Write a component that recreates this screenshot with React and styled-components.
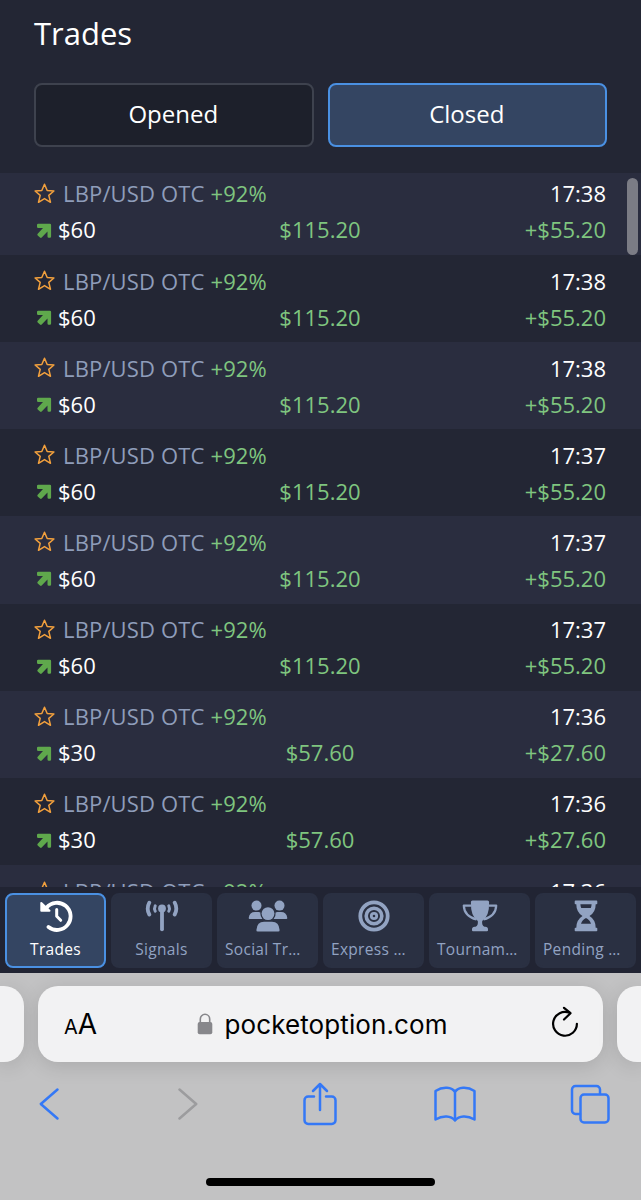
import React from "react";
import styled, { createGlobalStyle } from "styled-components";

const closedTrades = [
  { time: "17:38", amount: "$60", payout: "$115.20", profit: "+$55.20" },
  { time: "17:38", amount: "$60", payout: "$115.20", profit: "+$55.20" },
  { time: "17:38", amount: "$60", payout: "$115.20", profit: "+$55.20" },
  { time: "17:37", amount: "$60", payout: "$115.20", profit: "+$55.20" },
  { time: "17:37", amount: "$60", payout: "$115.20", profit: "+$55.20" },
  { time: "17:37", amount: "$60", payout: "$115.20", profit: "+$55.20" },
  { time: "17:36", amount: "$30", payout: "$57.60", profit: "+$27.60" },
  { time: "17:36", amount: "$30", payout: "$57.60", profit: "+$27.60" },
  { time: "17:36" },
];

const StarIcon = () => (
  <svg width="21" height="21" viewBox="0 0 21 21">
    <path
      d="M10.500 1.200l2.700 6.300 6.700.5-5.100 4.400 1.700 6.900-6-3.700-6 3.700 1.700-6.900L1.100 8l6.700-.5z"
      fill="none"
      stroke="#f2a03d"
      strokeWidth="1.500"
      strokeLinejoin="round"
    />
  </svg>
);

const ArrowIcon = () => (
  <svg width="16" height="16" viewBox="0 0 16 16">
    <path
      d="M2.200 .8h11.700a1.200 1.200 0 0 1 1.200 1.200v11.600a1.200 1.200 0 0 1-1.200 1.200h-1.200a1.200 1.200 0 0 1-1.200-1.200V8.400L5.700 14.500a1.200 1.200 0 0 1-1.700 0l-2.300-2a1.200 1.200 0 0 1 0-1.700L7 5H2.200A1.200 1.200 0 0 1 1 3.800V2A1.200 1.200 0 0 1 2.200 .8z"
      fill="#5fa84c"
    />
  </svg>
);

const HistoryIcon = () => (
  <svg width="34" height="32" viewBox="0 0 34 32">
    <path
      d="M7.500 7.700A13.600 13.600 0 1 1 9.500 27"
      fill="none"
      stroke="currentColor"
      strokeWidth="3.800"
      strokeLinecap="round"
    />
    <path
      d="M2.300 3v7.700h8.200z"
      fill="currentColor"
      stroke="currentColor"
      strokeWidth="2"
      strokeLinejoin="round"
    />
    <path
      d="M17.700 9.500v6.800l4 4"
      fill="none"
      stroke="currentColor"
      strokeWidth="3"
      strokeLinecap="round"
      strokeLinejoin="round"
    />
  </svg>
);

const AntennaIcon = () => (
  <svg width="34" height="32" viewBox="0 0 34 32">
    <circle cx="17" cy="8.500" r="3.900" fill="currentColor" />
    <g fill="none" stroke="currentColor" strokeLinecap="round">
      <path d="M17 9v20.300" strokeWidth="3.800" />
      <path
        d="M10.200 5.800q-1.300 2.700 0 5.400M23.800 5.800q1.300 2.700 0 5.400"
        strokeWidth="3"
      />
      <path
        d="M4.300 2.700q-3.200 6 0 11.800M29.700 2.700q3.200 6 0 11.800"
        strokeWidth="3.800"
      />
    </g>
  </svg>
);

const PeopleIcon = () => (
  <svg width="40" height="32" viewBox="0 0 40 32" fill="currentColor">
    <circle cx="8.500" cy="5.600" r="5" />
    <circle cx="31.500" cy="5.600" r="5" />
    <circle cx="20" cy="13.600" r="6.400" />
    <path d="M1.700 19A1 1 0 0 1 .7 17.900q.8-5.900 6.300-5.900h3.600q1 0 1.800.5-.4 3.900 2 6.500z" />
    <path d="M38.300 19a1 1 0 0 0 1-1.100q-.8-5.900-6.300-5.900h-3.600q-1 0-1.800.5.4 3.900-2 6.500z" />
    <path d="M16 21.700h8q7 0 7.600 8.200a1.400 1.400 0 0 1-1.400 1.600H9.800a1.400 1.400 0 0 1-1.400-1.600q.6-8.200 7.600-8.200z" />
  </svg>
);

const TargetIcon = () => (
  <svg width="32" height="32" viewBox="0 0 32 32">
    <g fill="none" stroke="currentColor">
      <circle cx="16" cy="16" r="13.700" strokeWidth="3.800" />
      <circle cx="16" cy="16" r="7.800" strokeWidth="3.600" />
      <circle cx="16" cy="16" r="2.700" strokeWidth="2.800" />
    </g>
  </svg>
);

const TrophyIcon = () => (
  <svg width="36" height="32" viewBox="0 0 36 32">
    <path
      d="M10.500 .5h15a1.600 1.600 0 0 1 1.600 1.600Q27.500 16.500 20.200 21q-.6 4.500 2.300 5.700h.8a2.800 2.800 0 0 1 2.700 2.800v.8a1 1 0 0 1-1 1H11a1 1 0 0 1-1-1v-.8a2.800 2.800 0 0 1 2.700-2.800h.8q2.900-1.200 2.300-5.700Q8.500 16.500 8.900 2.100A1.600 1.600 0 0 1 10.500 .5z"
      fill="currentColor"
    />
    <path
      d="M9.500 5.600H1.800q.3 10.400 12.700 13.900M26.500 5.600h7.700q-.3 10.400-12.700 13.900"
      fill="none"
      stroke="currentColor"
      strokeWidth="2.200"
      strokeLinejoin="round"
    />
  </svg>
);

const HourglassIcon = () => (
  <svg width="24" height="32" viewBox="0 0 24 32">
    <path
      d="M1.500 .5h21q.8 0 .8.900v2q0 .8-.8.800h-.8q0 8-6.200 11.800 6.200 3.800 6.200 11.800h.8q.8 0 .8.800v1.900q0 .8-.8.800h-21q-.8 0-.8-.8v-1.900q0-.8.800-.8h.8q0-8 6.200-11.800Q2.300 12.200 2.300 4.200h-.8q-.8 0-.8-.8v-2q0-.9.800-.9zM6.400 4.200q.1 2 .8 3.700h9.600q.7-1.700.8-3.700zM12 18q-3.600 1.500-5 5.800h10q-1.400-4.300-5-5.800z"
      fill="currentColor"
      fillRule="evenodd"
    />
  </svg>
);

const navItems = [
  { label: "Trades", icon: <HistoryIcon />, active: true },
  { label: "Signals", icon: <AntennaIcon /> },
  { label: "Social Tr…", icon: <PeopleIcon />, cut: true },
  { label: "Express …", icon: <TargetIcon />, cut: true },
  { label: "Tournam…", icon: <TrophyIcon />, cut: true },
  { label: "Pending …", icon: <HourglassIcon />, cut: true },
];

const App = () => {
  return (
    <>
      <GlobalStyle />
      <Screen>
        <Header>
          <h1>Trades</h1>
          <Tabs>
            <Tab>Opened</Tab>
            <Tab $active>Closed</Tab>
          </Tabs>
        </Header>
        <TradeList>
          {closedTrades.map((trade, i) => (
            <TradeRow key={i}>
              <Line>
                <Asset>
                  <StarIcon />
                  <Pair>LBP/USD OTC</Pair>
                  <Gain>+92%</Gain>
                </Asset>
                <Time>{trade.time}</Time>
              </Line>
              {trade.amount && (
                <Line>
                  <Amount>
                    <ArrowIcon />
                    {trade.amount}
                  </Amount>
                  <Payout>{trade.payout}</Payout>
                  <Profit>{trade.profit}</Profit>
                </Line>
              )}
            </TradeRow>
          ))}
          <ScrollThumb />
        </TradeList>
        <BottomNav>
          {navItems.map((item) => (
            <NavItem key={item.label} $active={item.active}>
              {item.icon}
              <NavLabel $cut={item.cut}>{item.label}</NavLabel>
            </NavItem>
          ))}
        </BottomNav>
        <Browser>
          <AddressRow>
            <SideTab $left />
            <AddressBar>
              <TextSize>
                <small>A</small>A
              </TextSize>
              <Domain>
                <svg width="16" height="22" viewBox="0 0 16 22">
                  <path
                    d="M3.300 10V6.200a4.700 4.900 0 0 1 9.400 0V10"
                    fill="none"
                    stroke="#87878b"
                    strokeWidth="1.600"
                  />
                  <rect
                    x=".7"
                    y="9"
                    width="14.600"
                    height="12.300"
                    rx="2"
                    fill="#87878b"
                  />
                </svg>
                pocketoption.com
              </Domain>
              <ReloadButton>
                <svg width="28" height="32" viewBox="0 0 28 32">
                  <path d="M18.500 6.800a11.900 11.900 0 1 0 7.400 11" />
                  <path d="M13 1.800l6.500 5.400-6.500 6.300" />
                </svg>
              </ReloadButton>
            </AddressBar>
            <SideTab />
          </AddressRow>
          <Toolbar>
            <ToolButton>
              <svg width="22" height="34" viewBox="0 0 22 34">
                <path d="M18.500 2.500L1.800 17l16.700 14.500" />
              </svg>
            </ToolButton>
            <ToolButton $disabled>
              <svg width="20" height="34" viewBox="0 0 20 34">
                <path d="M1.500 2.500L18.200 17 1.500 31.500" />
              </svg>
            </ToolButton>
            <ToolButton>
              <svg width="34" height="44" viewBox="0 0 34 44">
                <path d="M11 14.500H5.200a3.700 3.700 0 0 0-3.700 3.700v20.100A3.700 3.700 0 0 0 5.200 42h23.600a3.700 3.700 0 0 0 3.700-3.700V18.200a3.700 3.700 0 0 0-3.700-3.700H23M17 28V2.500M10 9l7-7 7 7" />
              </svg>
            </ToolButton>
            <ToolButton>
              <svg width="42" height="36" viewBox="0 0 42 36">
                <path d="M21 6C18 1 9 .2 1.500 5v28.500C9 29 17 29.500 21 34.500c4-5 12-5.500 19.500-1V5C33 .2 24 1 21 6v28" />
              </svg>
            </ToolButton>
            <ToolButton>
              <svg width="40" height="40" viewBox="0 0 40 40">
                <path d="M30 10V5.500A3.500 3.500 0 0 0 26.500 2h-21A3.500 3.500 0 0 0 2 5.500v21A3.500 3.500 0 0 0 5.500 30H10" />
                <rect x="10.500" y="10.500" width="28" height="28" rx="3.500" />
              </svg>
            </ToolButton>
          </Toolbar>
          <HomeIndicator />
        </Browser>
      </Screen>
    </>
  );
};

const GlobalStyle = createGlobalStyle`
  * {
    box-sizing: border-box;
  }
  body {
    margin: 0;
    background: #232634;
  }
  button {
    font: inherit;
    color: inherit;
  }
  svg {
    display: block;
    flex-shrink: 0;
  }
`;

const Screen = styled.div`
  width: 641px;
  height: 1200px;
  display: flex;
  flex-direction: column;
  overflow: hidden;
  background: #232634;
  color: #fff;
  font-family: "Open Sans", "Noto Sans", sans-serif;
`;

const Header = styled.header`
  height: 173px;
  padding: 12px 34px 0;
  h1 {
    margin: 0 0 29px;
    font-size: 31px;
    font-weight: 400;
    line-height: 42px;
  }
`;

const Tabs = styled.div`
  display: grid;
  grid-template-columns: 1fr 1fr;
  gap: 14px;
`;

const Tab = styled.button`
  height: 64px;
  padding: 0 1px 3px 0;
  font-size: 24px;
  border-radius: 8px;
  border: 2px solid ${(props) => (props.$active ? "#4a90e2" : "#3e424e")};
  background: ${(props) => (props.$active ? "#344562" : "#1d202b")};
`;

const TradeList = styled.main`
  position: relative;
  height: 714px;
  overflow: hidden;
`;

const TradeRow = styled.div`
  height: 87.15px;
  padding: 8px 35px 0 34px;
  font-size: 22px;
  &:nth-child(odd) {
    background: #2a2d3f;
  }
  &:first-child {
    height: 82px;
    padding-top: 2.5px;
  }
  &:nth-child(9) {
    padding-top: 9px;
  }
`;

const Line = styled.div`
  display: grid;
  grid-template-columns: 1fr 1fr 1fr;
  align-items: center;
  height: 36px;
  line-height: 30px;
  padding-bottom: 1px;
`;

const Asset = styled.div`
  grid-column: span 2;
  display: flex;
  align-items: center;
`;

const Pair = styled.span`
  margin: 0 6px 0 8px;
  letter-spacing: 0.15px;
  color: #8f9dba;
`;

const Gain = styled.span`
  letter-spacing: 0.1px;
  color: #7fc57f;
`;

const Time = styled.span`
  text-align: right;
`;

const Amount = styled.div`
  display: flex;
  align-items: center;
  gap: 6px;
  padding-left: 2px;
  svg {
    margin-top: 3px;
  }
`;

const Payout = styled.span`
  text-align: center;
  color: #7fc57f;
`;

const Profit = styled.span`
  text-align: right;
  color: #7fc57f;
`;

const ScrollThumb = styled.div`
  position: absolute;
  top: 5px;
  right: 3px;
  width: 11px;
  height: 77px;
  border-radius: 6px;
  background: #7b7c85;
`;

const BottomNav = styled.nav`
  height: 86px;
  display: flex;
  gap: 5px;
  padding: 6px 5px 0;
  background: #212433;
`;

const NavItem = styled.button`
  flex: 0 0 101px;
  height: 75px;
  padding: 5px 0 0;
  display: flex;
  flex-direction: column;
  align-items: center;
  border-radius: 8px;
  border: 2px solid ${(props) => (props.$active ? "#4a90e2" : "#2a3042")};
  background: ${(props) => (props.$active ? "#344562" : "#2a3042")};
  color: ${(props) => (props.$active ? "#fff" : "#92a3c2")};
`;

const NavLabel = styled.span`
  width: ${(props) => (props.$cut ? "85px" : "auto")};
  margin-top: 5px;
  font-size: 15.5px;
  line-height: 24px;
  letter-spacing: 0.3px;
  text-align: left;
  white-space: nowrap;
`;

const Browser = styled.footer`
  height: 227px;
  padding-top: 13px;
  background: #c2c2c3;
  display: flex;
  flex-direction: column;
  align-items: center;
`;

const AddressRow = styled.div`
  width: 100%;
  height: 76px;
  display: flex;
  gap: 14px;
`;

const SideTab = styled.div`
  flex: 0 0 24px;
  background: #f2f2f3;
  border-radius: ${(props) => (props.$left ? "0 20px 20px 0" : "20px 0 0 20px")};
  box-shadow: 0 4px 20px rgba(0, 0, 0, 0.13);
`;

const AddressBar = styled.div`
  flex: 1;
  display: flex;
  align-items: center;
  justify-content: space-between;
  padding: 0 24px 0 26px;
  border-radius: 20px;
  background: #f2f2f3;
  color: #000;
  font-family: Inter, sans-serif;
  box-shadow: 0 4px 20px rgba(0, 0, 0, 0.13);
`;

const TextSize = styled.span`
  font-size: 28px;
  small {
    font-size: 20px;
  }
`;

const Domain = styled.div`
  display: flex;
  align-items: center;
  gap: 12px;
  margin-right: 4px;
  font-size: 26px;
  letter-spacing: 0.1px;
`;

const ReloadButton = styled.div`
  padding-bottom: 4px;
  svg {
    fill: none;
    stroke: #000;
    stroke-width: 2.2px;
    stroke-linecap: round;
    stroke-linejoin: round;
  }
`;

const Toolbar = styled.div`
  width: 100%;
  height: 84px;
  padding: 0 29px 0 28px;
  display: flex;
  align-items: center;
  justify-content: space-between;
`;

const ToolButton = styled.div`
  width: 44px;
  display: flex;
  justify-content: center;
  padding-left: ${(props) => (props.$disabled ? "6px" : "0")};
  svg {
    fill: none;
    stroke: ${(props) => (props.$disabled ? "#9c9c9e" : "#3478f6")};
    stroke-width: 2.5px;
    stroke-linecap: round;
    stroke-linejoin: round;
  }
`;

const HomeIndicator = styled.div`
  width: 229px;
  height: 8px;
  margin-top: 32px;
  border-radius: 4px;
  background: #000;
`;

export default App;
